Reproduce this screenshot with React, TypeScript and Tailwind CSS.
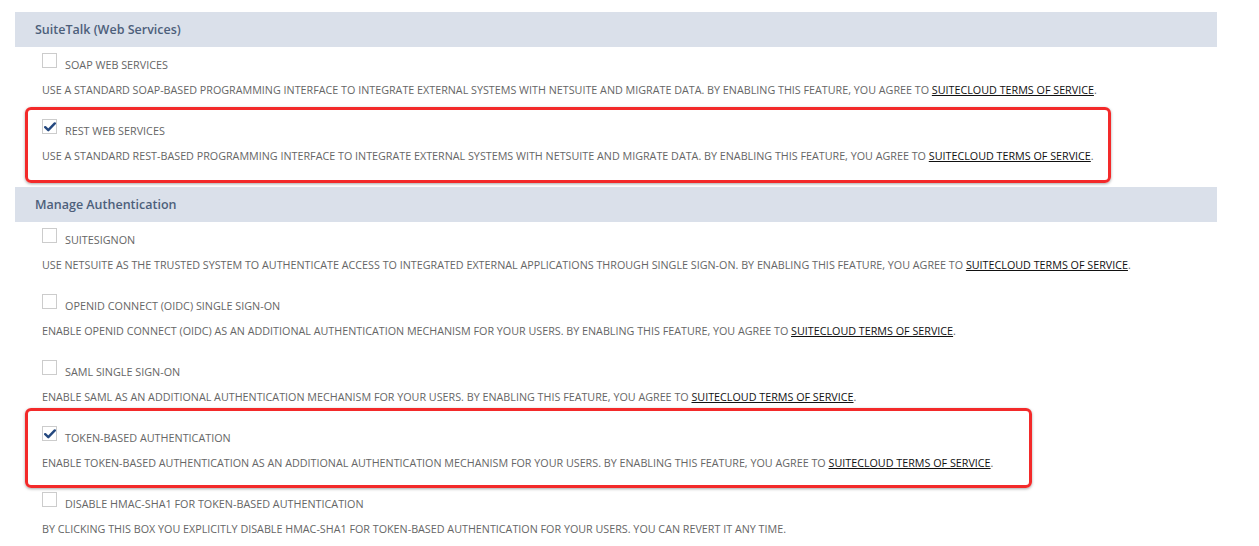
import React from "react";

type Row = { label: string; desc: string; checked?: boolean; link?: boolean };

const sec1: Row[] = [
  {
    label: "SOAP WEB SERVICES",
    desc: "USE A STANDARD SOAP-BASED PROGRAMMING INTERFACE TO INTEGRATE EXTERNAL SYSTEMS WITH NETSUITE AND MIGRATE DATA. BY ENABLING THIS FEATURE, YOU AGREE TO ",
    link: true,
  },
  {
    label: "REST WEB SERVICES",
    desc: "USE A STANDARD REST-BASED PROGRAMMING INTERFACE TO INTEGRATE EXTERNAL SYSTEMS WITH NETSUITE AND MIGRATE DATA. BY ENABLING THIS FEATURE, YOU AGREE TO ",
    link: true,
    checked: true,
  },
];

const sec2: Row[] = [
  {
    label: "SUITESIGNON",
    desc: "USE NETSUITE AS THE TRUSTED SYSTEM TO AUTHENTICATE ACCESS TO INTEGRATED EXTERNAL APPLICATIONS THROUGH SINGLE SIGN-ON. BY ENABLING THIS FEATURE, YOU AGREE TO ",
    link: true,
  },
  {
    label: "OPENID CONNECT (OIDC) SINGLE SIGN-ON",
    desc: "ENABLE OPENID CONNECT (OIDC) AS AN ADDITIONAL AUTHENTICATION MECHANISM FOR YOUR USERS. BY ENABLING THIS FEATURE, YOU AGREE TO ",
    link: true,
  },
  {
    label: "SAML SINGLE SIGN-ON",
    desc: "ENABLE SAML AS AN ADDITIONAL AUTHENTICATION MECHANISM FOR YOUR USERS. BY ENABLING THIS FEATURE, YOU AGREE TO ",
    link: true,
  },
  {
    label: "TOKEN-BASED AUTHENTICATION",
    desc: "ENABLE TOKEN-BASED AUTHENTICATION AS AN ADDITIONAL AUTHENTICATION MECHANISM FOR YOUR USERS. BY ENABLING THIS FEATURE, YOU AGREE TO ",
    link: true,
    checked: true,
  },
  {
    label: "DISABLE HMAC-SHA1 FOR TOKEN-BASED AUTHENTICATION",
    desc: "BY CLICKING THIS BOX YOU EXPLICITLY DISABLE HMAC-SHA1 FOR TOKEN-BASED AUTHENTICATION FOR YOUR USERS. YOU CAN REVERT IT ANY TIME.",
  },
];

function Checkbox({ checked }: { checked?: boolean }) {
  return (
    <div className="w-[15px] h-[15px] border border-[#cccccc] bg-white flex items-center justify-center shrink-0">
      {checked && (
        <svg width="12" height="10" viewBox="0 0 12 10">
          <path d="M1.2 5.2 L4.3 8.2 L10.8 1.4" fill="none" stroke="#24487f" strokeWidth="2.4" strokeLinecap="round" strokeLinejoin="round" />
        </svg>
      )}
    </div>
  );
}

function FeatureRow({ r }: { r: Row }) {
  return (
    <div className="h-[66px] pl-[27px] pt-[6px]">
      <div className="flex items-end h-[15px]">
        <Checkbox checked={r.checked} />
        <span className="ml-[8px] text-[10.8px] leading-[11px] text-[#666666] translate-y-[2px]">{r.label}</span>
      </div>
      <div className="mt-[15px] text-[10.75px] leading-[14px] text-[#666666] whitespace-nowrap">
        {r.desc}
        {r.link && (
          <>
            <span className="text-[#111111] underline underline-offset-[1px]">SUITECLOUD TERMS OF SERVICE</span>.
          </>
        )}
      </div>
    </div>
  );
}

function Header({ title }: { title: string }) {
  return (
    <div className="h-[35px] bg-[#dae0ea] pl-[20px] pt-[2px] flex items-center text-[12.5px] font-semibold text-[#4d5f7b]">
      {title}
    </div>
  );
}

export default function App() {
  return (
    <div
      className="relative w-[1259px] h-[546px] bg-white overflow-hidden"
      style={{ fontFamily: "'Open Sans', 'Liberation Sans', sans-serif" }}
    >
      <div className="pt-[12px] pl-[15px] w-[1217px]">
        <Header title="SuiteTalk (Web Services)" />
        {sec1.map((r) => (
          <FeatureRow key={r.label} r={r} />
        ))}
        <div className="h-[8px]" />
        <Header title="Manage Authentication" />
        {sec2.map((r) => (
          <FeatureRow key={r.label} r={r} />
        ))}
      </div>
      <div className="absolute left-[25px] top-[107px] w-[1086px] h-[76px] border-[3px] border-[#f32a2a] rounded-[6px] shadow-[0_1px_3px_rgba(0,0,0,0.35)] pointer-events-none" />
      <div className="absolute left-[25px] top-[408px] w-[1007px] h-[80px] border-[3px] border-[#f32a2a] rounded-[6px] shadow-[0_1px_3px_rgba(0,0,0,0.35)] pointer-events-none" />
    </div>
  );
}
